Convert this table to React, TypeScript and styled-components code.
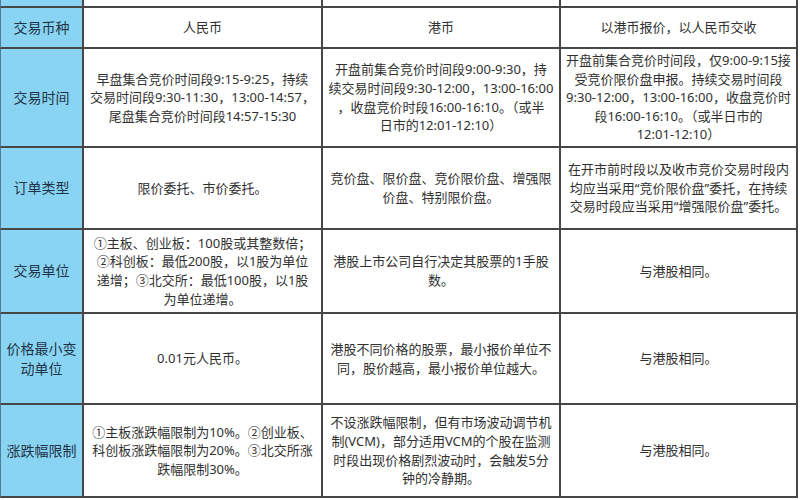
import { Fragment } from "react";
import styled, { createGlobalStyle } from "styled-components";

const GlobalStyle = createGlobalStyle`
  html, body {
    margin: 0;
    padding: 0;
    background: #ffffff;
  }
  body {
    font-family: "Noto Sans", "Noto Sans CJK SC", sans-serif;
  }
`;

const Sheet = styled.div`
  display: grid;
  grid-template-columns: 84px 239px 238px 237px;
  grid-template-rows: 8px 41px 99px 82px 84px 91px 93px;
  width: 798px;
`;

const Cell = styled.div<{ $label?: boolean }>`
  box-sizing: border-box;
  display: flex;
  align-items: center;
  justify-content: center;
  text-align: center;
  white-space: nowrap;
  border-right: 2px solid #474747;
  border-bottom: 2px solid #474747;
  border-left: ${(p) => (p.$label ? "1px solid #4f7f96" : "none")};
  background: ${(p) => (p.$label ? "#8ad4f3" : "#ffffff")};
  color: ${(p) => (p.$label ? "#1f3448" : "#303030")};
  font-size: ${(p) => (p.$label ? "14px" : "13px")};
  line-height: ${(p) => (p.$label ? "20px" : "18.6px")};
  padding: 0 2px;
  overflow: hidden;
`;

type Row = { label: string[]; cells: string[][] };

const rows: Row[] = [
  { label: [""], cells: [[""], [""], [""]] },
  {
    label: ["交易币种"],
    cells: [["人民币"], ["港币"], ["以港币报价，以人民币交收"]],
  },
  {
    label: ["交易时间"],
    cells: [
      [
        "早盘集合竞价时间段9:15-9:25，持续",
        "交易时间段9:30-11:30，13:00-14:57，",
        "尾盘集合竞价时间段14:57-15:30",
      ],
      [
        "开盘前集合竞价时间段9:00-9:30，持",
        "续交易时间段9:30-12:00，13:00-16:00",
        "，收盘竞价时段16:00-16:10。（或半",
        "日市的12:01-12:10）",
      ],
      [
        "开盘前集合竞价时间段，仅9:00-9:15接",
        "受竞价限价盘申报。持续交易时间段",
        "9:30-12:00，13:00-16:00，收盘竞价时",
        "段16:00-16:10。（或半日市的",
        "12:01-12:10）",
      ],
    ],
  },
  {
    label: ["订单类型"],
    cells: [
      ["限价委托、市价委托。"],
      ["竞价盘、限价盘、竞价限价盘、增强限", "价盘、特别限价盘。"],
      [
        "在开市前时段以及收市竞价交易时段内",
        "均应当采用“竞价限价盘”委托，在持续",
        "交易时段应当采用“增强限价盘”委托。",
      ],
    ],
  },
  {
    label: ["交易单位"],
    cells: [
      [
        "①主板、创业板：100股或其整数倍；",
        "②科创板：最低200股，以1股为单位",
        "递增；③北交所：最低100股，以1股",
        "为单位递增。",
      ],
      ["港股上市公司自行决定其股票的1手股", "数。"],
      ["与港股相同。"],
    ],
  },
  {
    label: ["价格最小变", "动单位"],
    cells: [
      ["0.01元人民币。"],
      ["港股不同价格的股票，最小报价单位不", "同，股价越高，最小报价单位越大。"],
      ["与港股相同。"],
    ],
  },
  {
    label: ["涨跌幅限制"],
    cells: [
      [
        "①主板涨跌幅限制为10%。②创业板、",
        "科创板涨跌幅限制为20%。③北交所涨",
        "跌幅限制30%。",
      ],
      [
        "不设涨跌幅限制，但有市场波动调节机",
        "制(VCM)，部分适用VCM的个股在监测",
        "时段出现价格剧烈波动时，会触发5分",
        "钟的冷静期。",
      ],
      ["与港股相同。"],
    ],
  },
];

const Lines = ({ lines }: { lines: string[] }) => (
  <span>
    {lines.map((l, i) => (
      <Fragment key={i}>
        {l}
        {i < lines.length - 1 && <br />}
      </Fragment>
    ))}
  </span>
);

const App = () => {
  return (
    <>
      <GlobalStyle />
      <Sheet>
        {rows.map((row, r) => (
          <Fragment key={r}>
            <Cell $label>
              <Lines lines={row.label} />
            </Cell>
            {row.cells.map((c, i) => (
              <Cell key={i}>
                <Lines lines={c} />
              </Cell>
            ))}
          </Fragment>
        ))}
      </Sheet>
    </>
  );
};

export default App;
